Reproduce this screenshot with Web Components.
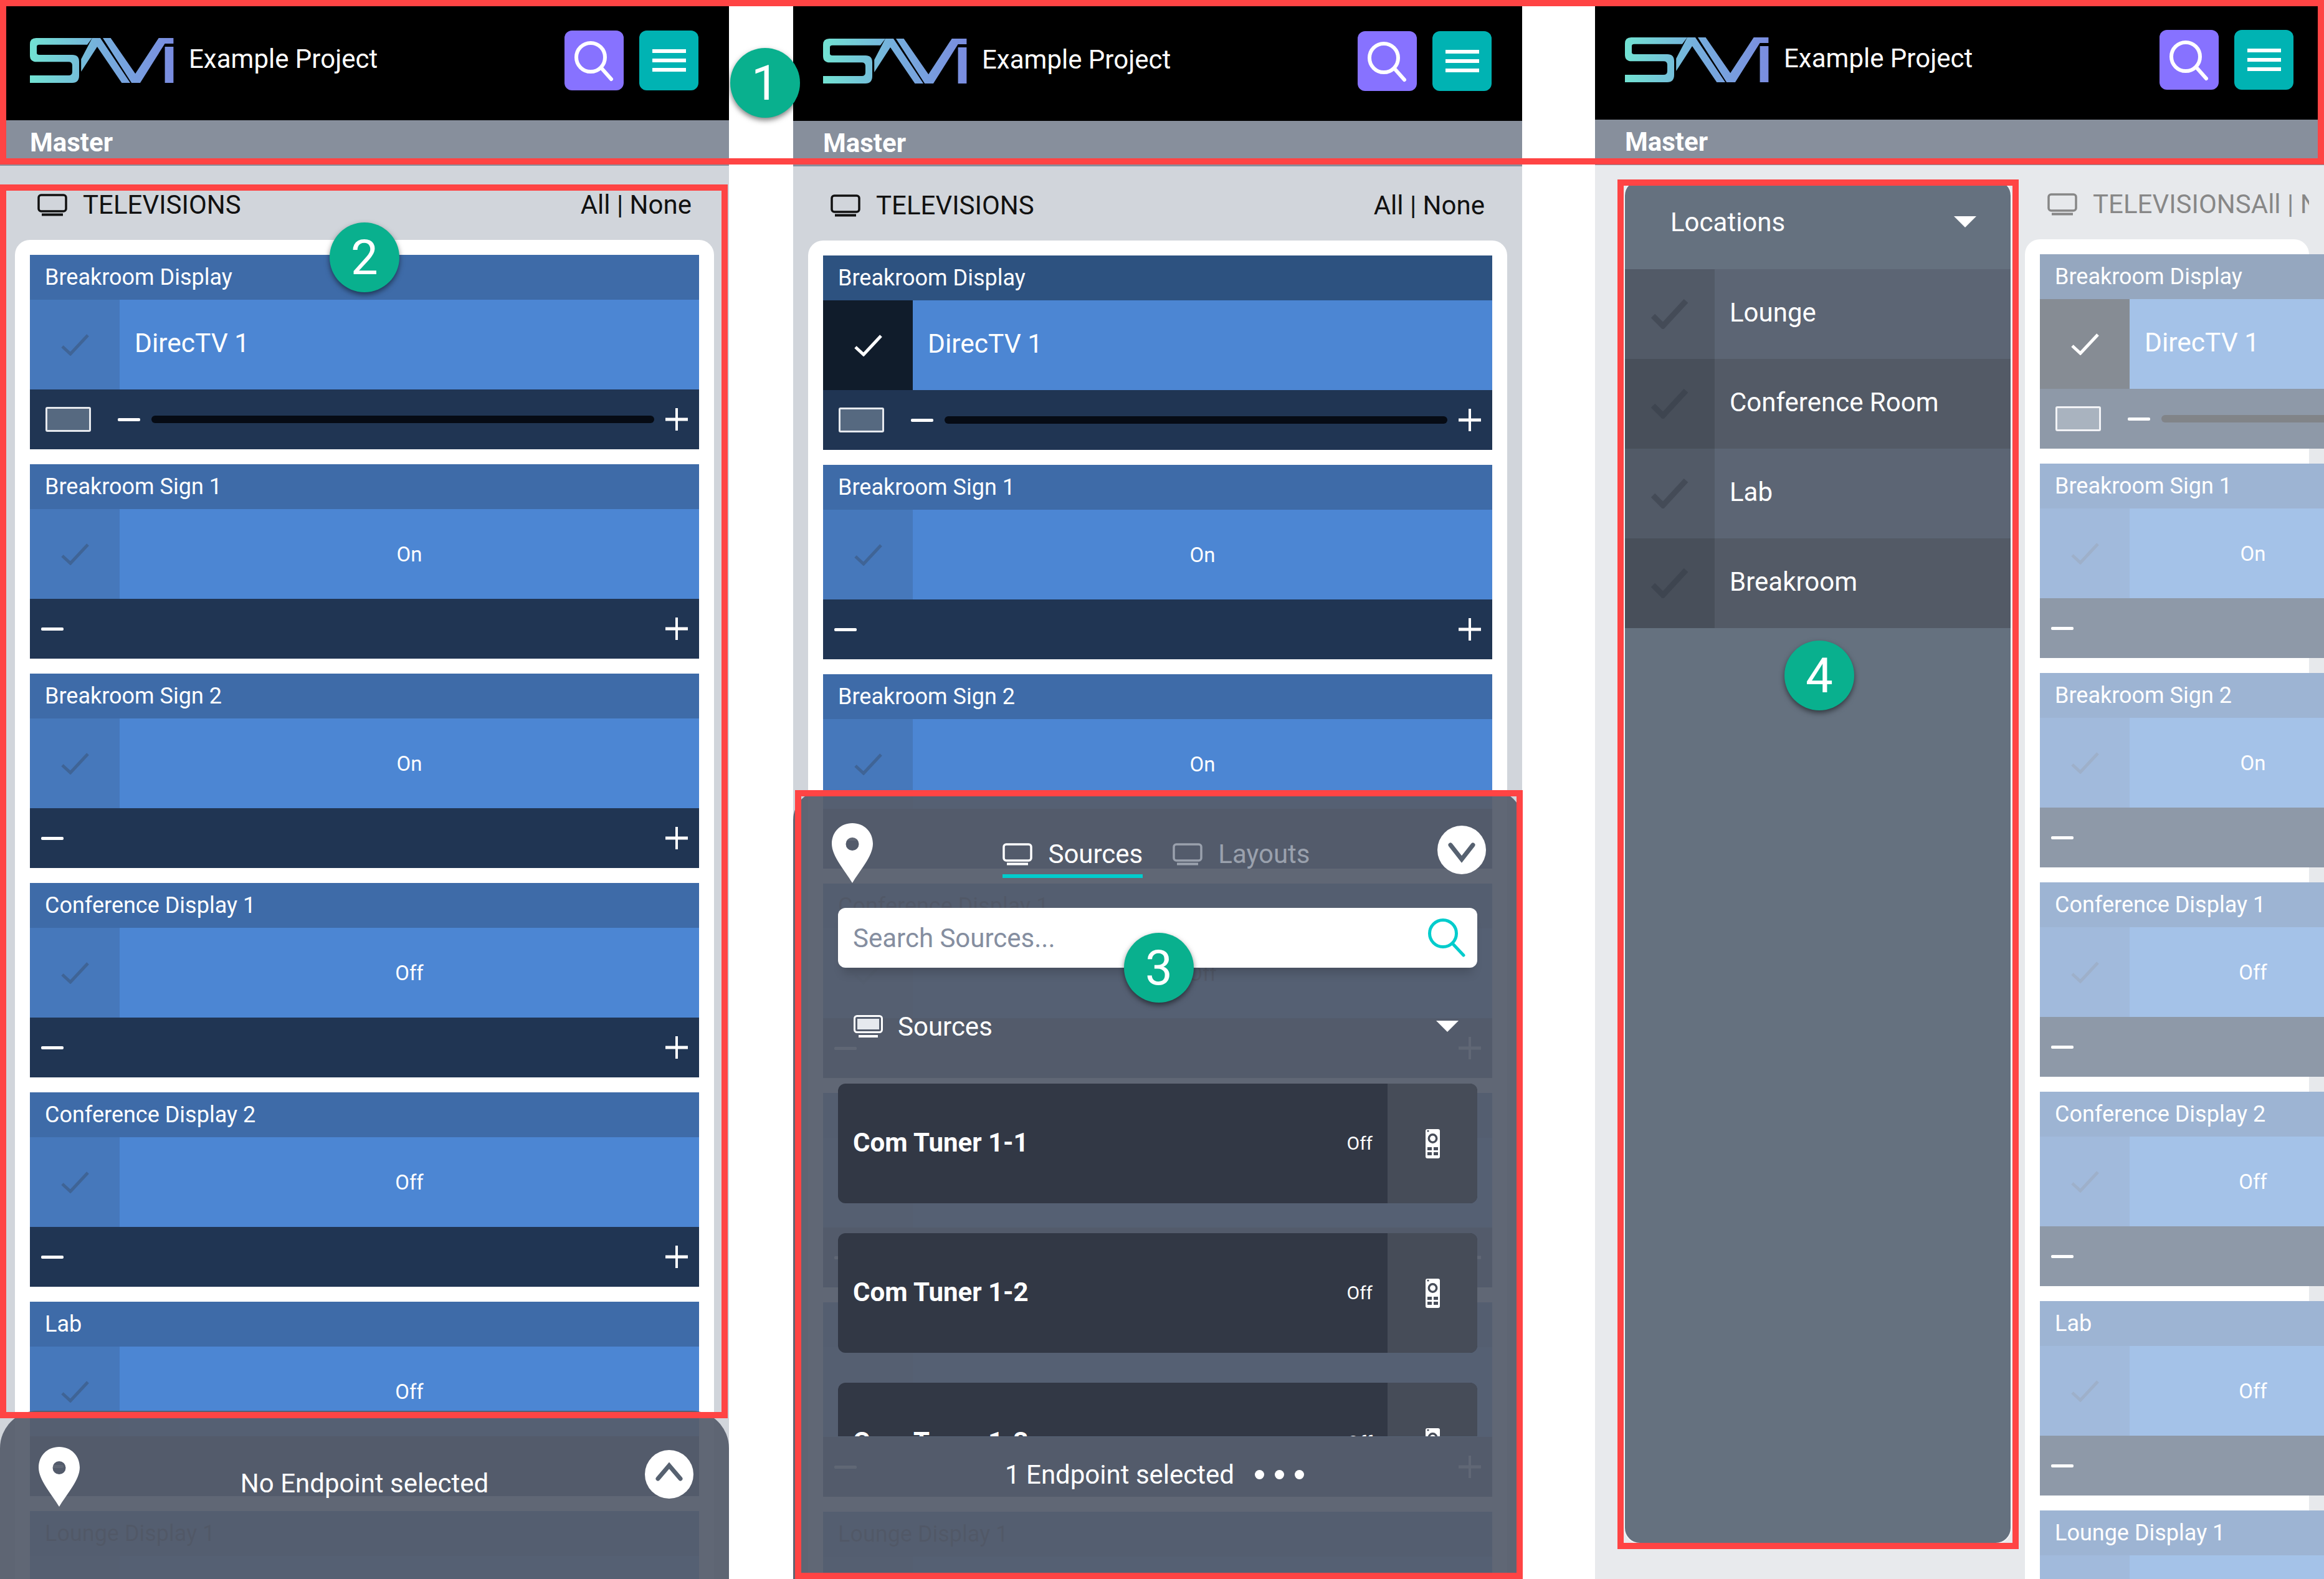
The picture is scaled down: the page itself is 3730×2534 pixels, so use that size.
<!DOCTYPE html>
<html lang="en">
<head>
<meta charset="utf-8">
<title>Example Project</title>
<style>
  html, body { margin: 0; padding: 0; width: 3730px; height: 2534px; overflow: hidden; background: #fff; }
  body { position: relative; display: flex; align-items: flex-start; font-family: Roboto, "Liberation Sans", sans-serif; }
</style>
</head>
<body>
  <savi-phone>
    <tv-list>
      <endpoint-item label="Breakroom Display" value="DirecTV 1" source slider></endpoint-item>
      <endpoint-item label="Breakroom Sign 1" value="On"></endpoint-item>
      <endpoint-item label="Breakroom Sign 2" value="On"></endpoint-item>
      <endpoint-item label="Conference Display 1" value="Off"></endpoint-item>
      <endpoint-item label="Conference Display 2" value="Off"></endpoint-item>
      <endpoint-item label="Lab" value="Off"></endpoint-item>
      <endpoint-item label="Lounge Display 1" value="Off" dim></endpoint-item>
    </tv-list>
    <endpoint-panel>No Endpoint selected</endpoint-panel>
  </savi-phone>

  <savi-phone style="margin: 1px 0 0 103px">
    <tv-list>
      <endpoint-item label="Breakroom Display" value="DirecTV 1" source slider selected></endpoint-item>
      <endpoint-item label="Breakroom Sign 1" value="On"></endpoint-item>
      <endpoint-item label="Breakroom Sign 2" value="On"></endpoint-item>
      <endpoint-item label="Conference Display 1" value="Off" dim></endpoint-item>
      <endpoint-item label="Conference Display 2" value="Off" dim></endpoint-item>
      <endpoint-item label="Lab" value="Off" dim></endpoint-item>
      <endpoint-item label="Lounge Display 1" value="Off" dim></endpoint-item>
    </tv-list>
    <source-panel>
      <source-card name="Com Tuner 1-1"></source-card>
      <source-card name="Com Tuner 1-2"></source-card>
      <source-card name="Com Tuner 1-3"></source-card>
    </source-panel>
  </savi-phone>

  <savi-phone style="margin: -1px 0 0 117px">
    <tv-list shifted>
      <endpoint-item label="Breakroom Display" value="DirecTV 1" source slider selected></endpoint-item>
      <endpoint-item label="Breakroom Sign 1" value="On"></endpoint-item>
      <endpoint-item label="Breakroom Sign 2" value="On"></endpoint-item>
      <endpoint-item label="Conference Display 1" value="Off"></endpoint-item>
      <endpoint-item label="Conference Display 2" value="Off"></endpoint-item>
      <endpoint-item label="Lab" value="Off"></endpoint-item>
      <endpoint-item label="Lounge Display 1" value="Off"></endpoint-item>
    </tv-list>
    <location-drawer>
      <location-row>Lounge</location-row>
      <location-row dark>Conference Room</location-row>
      <location-row>Lab</location-row>
      <location-row dark>Breakroom</location-row>
    </location-drawer>
  </savi-phone>

  <red-frame style="left:0;top:0;width:3730px;height:264px"></red-frame>
  <red-frame style="left:0;top:296px;width:1168px;height:1980px"></red-frame>
  <red-frame style="left:1276px;top:1268px;width:1168px;height:1266px"></red-frame>
  <red-frame style="left:2596px;top:288px;width:644px;height:2198px"></red-frame>

  <num-badge style="left:1172px;top:77px">1</num-badge>
  <num-badge style="left:529px;top:357px">2</num-badge>
  <num-badge style="left:1804px;top:1497px">3</num-badge>
  <num-badge style="left:2864px;top:1028px">4</num-badge>

<script>
  const tvIcon = `
    <svg width="48" height="36" viewBox="0 0 48 36" fill="none" stroke="currentColor" stroke-width="3.5">
      <rect x="2" y="2" width="44" height="26" rx="4"/>
      <path d="M7 33.5H41" stroke-width="4"/>
    </svg>`;

  const checkIcon = `
    <svg width="45" height="36" viewBox="0 0 45 36" fill="none" stroke="currentColor" stroke-width="5">
      <path d="M2 21L15 33L43 3"/>
    </svg>`;

  const pinIcon = `
    <svg width="66" height="96" viewBox="0 0 66 96">
      <path fill="#fff" fill-rule="evenodd" d="M33 0C14 0 0 14 0 33C0 53 21 76 33 96C45 76 66 53 66 33C66 14 52 0 33 0ZM33 23A10.5 10.5 0 1 1 33 44A10.5 10.5 0 1 1 33 23Z"/>
    </svg>`;

  // round white button, chevron flips with the panel state
  const chevron = (d) => `
    <svg width="78" height="78" viewBox="0 0 78 78">
      <circle cx="39" cy="39" r="39" fill="#fff"/>
      <path d="${d}" fill="none" stroke="#566170" stroke-width="7" stroke-linecap="round" stroke-linejoin="miter"/>
    </svg>`;

  class SaviPhone extends HTMLElement {
    constructor() {
      super();
      this.attachShadow({ mode: 'open' }).innerHTML = `
        <style>
          :host { display: block; position: relative; flex: 0 0 1170px; width: 1170px; height: 2536px; overflow: hidden; color: #fff; font-family: Roboto, "Liberation Sans", sans-serif; }
        </style>
        <savi-header></savi-header>
        <slot></slot>`;
    }
  }

  class SaviHeader extends HTMLElement {
    constructor() {
      super();
      this.attachShadow({ mode: 'open' }).innerHTML = `
        <style>
          :host { display: block; }
          .top { height: 193px; background: #000; display: flex; align-items: center; padding: 0 49px 0 48px; box-sizing: border-box; }
          .logo { display: block; margin-top: 1px; }
          .title { margin-left: 24px; font-size: 42px; line-height: 50px; margin-top: -4px; flex: 1; }
          .btn { width: 95px; height: 96px; border-radius: 12px; display: flex; align-items: center; justify-content: center; margin-left: 25px; margin-top: 1px; }
          .search { background: #8772ff; }
          .menu { background: #00b3b3; }
          .sub { height: 73px; background: #878f9c; padding-left: 48px; font-size: 42px; font-weight: 700; line-height: 72px; }
        </style>
        <div class="top">
          <svg class="logo" width="231" height="72" viewBox="0 0 231 72">
            <defs>
              <linearGradient id="g" gradientUnits="userSpaceOnUse" x1="0" y1="0" x2="231" y2="0">
                <stop offset="0" stop-color="#72e2d2"/>
                <stop offset="0.5" stop-color="#76aedd"/>
                <stop offset="1" stop-color="#7a8ce0"/>
              </linearGradient>
            </defs>
            <path fill="url(#g)" d="M10 0H100L92 10.7H15Q11 10.7 11 14V24Q11 27 15 27H68Q79 27 79 38V60Q79 72 68 72H0V60H62Q68 60 68 54V44Q68 38.3 62 38.3H11Q0 38.3 0 28V10Q0 0 10 0Z"/>
            <path fill="url(#g)" d="M100 0H113L161 72H147.4L108 14L82.2 54V34Z"/>
            <path fill="url(#g)" d="M117 0H129.6L169.2 57.3L206.7 0H230.4V9H216.6L177 72H163.2Z"/>
            <path fill="url(#g)" d="M216.6 14H230.4V72H216.6Z"/>
          </svg>
          <div class="title">Example Project</div>
          <div class="btn search">
            <svg width="95" height="96" viewBox="0 0 95 96" fill="none" stroke="#fff" stroke-width="6" stroke-linecap="round">
              <circle cx="42" cy="43" r="23"/>
              <path d="M59 60L75 78"/>
            </svg>
          </div>
          <div class="btn menu">
            <svg width="54" height="36" viewBox="0 0 54 36" fill="#fff">
              <rect y="0" width="54" height="6"/><rect y="15" width="54" height="6"/><rect y="30" width="54" height="6"/>
            </svg>
          </div>
        </div>
        <div class="sub">Master</div>`;
    }
  }

  class TvList extends HTMLElement {
    constructor() {
      super();
      this.attachShadow({ mode: 'open' }).innerHTML = `
        <style>
          :host { display: block; background: #d1d5db; height: 2270px; padding: 0 24px; color: #111; }
          :host([shifted]) { padding-left: 690px; opacity: .5; }
          .row { display: flex; align-items: center; height: 119px; box-sizing: border-box; padding: 6px 36px 0; overflow: hidden; font-size: 42px; white-space: nowrap; }
          .row svg { display: block; flex: none; margin-right: 25px; }
          .row .name { flex: 1 0 auto; }
          .row .pick { flex: none; }
          .card { background: #fff; border-radius: 24px 24px 0 0; padding: 24px; display: flex; flex-direction: column; gap: 24px; height: 100%; box-sizing: border-box; }
        </style>
        <div class="row">${tvIcon}<span class="name">TELEVISIONS</span><span class="pick">All | None</span></div>
        <div class="card"><slot></slot></div>`;
    }
  }

  class EndpointItem extends HTMLElement {
    connectedCallback() {
      if (this.shadowRoot) return;
      const label = this.getAttribute('label');
      const value = this.getAttribute('value');
      const thumb = this.hasAttribute('slider') ? '<span class="thumb"></span>' : '';
      const track = this.hasAttribute('slider') ? '<span class="track"></span>' : '<span class="grow"></span>';
      this.attachShadow({ mode: 'open' }).innerHTML = `
        <style>
          :host { display: block; min-width: 540px; color: #fff; flex: none; }
          .head { height: 72px; background: #3e6ba8; padding-left: 24px; font-size: 36px; line-height: 72px; }
          :host([selected]) .head { background: #2d5280; }
          .main { height: 144px; display: flex; background: #4c86d3; }
          .check { flex: 0 0 144px; background: #4678bb; color: #3f6496; display: flex; align-items: center; justify-content: center; }
          :host([selected]) .check { background: #101c2b; color: #fff; }
          .value { flex: 1; display: flex; align-items: center; justify-content: center; font-size: 33px; }
          :host([source]) .value { justify-content: flex-start; padding-left: 24px; font-size: 42.5px; padding-bottom: 6px; box-sizing: border-box; }
          :host([dim]) .head, :host([dim]) .value { color: #0a0f18; }
          .bar { height: 96px; background: #203553; display: flex; align-items: center; padding: 0 18px; box-sizing: border-box; }
          .thumb { flex: none; width: 73px; height: 40px; box-sizing: border-box; border: 3px solid #e6e9ee; border-radius: 3px; background: #566980; margin: 0 43px 0 7px; }
          .minus { flex: none; width: 36px; height: 5px; border-radius: 2px; background: #fff; margin-right: 18px; }
          .track { flex: 1; height: 12px; border-radius: 6px; background: #060b14; }
          .grow { flex: 1; }
          .plus { flex: none; width: 36px; height: 36px; margin-left: 18px; position: relative; }
          .plus svg { display: block; }
        </style>
        <div class="head">${label}</div>
        <div class="main">
          <div class="check">${checkIcon}</div>
          <div class="value">${value}</div>
        </div>
        <div class="bar">
          ${thumb}<span class="minus"></span>${track}
          <span class="plus"><svg width="36" height="36" viewBox="0 0 36 36" fill="#fff"><rect y="15.5" width="36" height="5"/><rect x="16" width="4" height="36"/></svg></span>
        </div>`;
    }
  }

  class EndpointPanel extends HTMLElement {
    constructor() {
      super();
      this.attachShadow({ mode: 'open' }).innerHTML = `
        <style>
          :host { position: absolute; left: 0; right: 0; top: 2264px; bottom: 0; display: grid; grid-template-columns: 66px 1fr 78px; padding: 58px 57px 0 62px; box-sizing: border-box; border-radius: 60px 60px 0 0; background: rgba(86, 94, 108, .94); color: #fff; font-size: 42px; }
          .pin svg, .chev svg { display: block; }
          .chev { margin-top: 5px; }
          .text { text-align: center; line-height: 52px; margin-top: 33px; padding-left: 7px; }
        </style>
        <div class="pin">${pinIcon}</div>
        <div class="text"><slot></slot></div>
        <div class="chev">${chevron('M21 46L39 25L57 46')}</div>`;
    }
  }

  class SourcePanel extends HTMLElement {
    constructor() {
      super();
      this.attachShadow({ mode: 'open' }).innerHTML = `
        <style>
          :host { position: absolute; left: 0; right: 0; top: 1267px; bottom: 0; display: block; border-radius: 48px 48px 0 0; background: rgba(86, 94, 108, .94); color: #fff; font-size: 42px; }
          .top { display: grid; grid-template-columns: 66px 1fr 78px; padding: 53px 58px 0 62px; height: 96px; }
          .top svg { display: block; }
          .chev { margin-top: 4px; }
          .tabs { display: flex; justify-content: center; gap: 48px; margin: 24px 0 0 4px; }
          .tab { display: flex; align-items: center; gap: 25px; height: 52px; padding-bottom: 6px; border-bottom: 6px solid transparent; line-height: 52px; color: #9aa1ad; }
          .tab.on { color: #fff; border-color: #00cccc; }
          .search { margin: 40px 72px 0; height: 96px; box-sizing: border-box; background: #fff; border-radius: 12px; display: flex; align-items: center; justify-content: space-between; padding: 0 18px 0 24px; color: #858ea0; box-shadow: 0 16px 16px -8px rgba(0, 0, 0, .18); }
          .search svg { display: block; }
          .group { margin: 47px 72px 45px; height: 94px; box-sizing: border-box; display: flex; align-items: center; padding: 0 30px 0 25px; }
          .group svg { display: block; margin-right: 24px; }
          .group span { flex: 1; }
          .tri { width: 0; height: 0; border-left: 18px solid transparent; border-right: 18px solid transparent; border-top: 18px solid #fff; }
          .cards { height: 566px; margin: 0 72px; overflow: hidden; display: flex; flex-direction: column; gap: 48px; }
          .foot { height: 122px; display: flex; align-items: center; justify-content: center; padding-right: 10px; }
          .dots { display: flex; gap: 17px; margin-left: 33px; }
          .dots i { display: block; width: 15px; height: 15px; border-radius: 50%; background: #fff; }
        </style>
        <div class="top">
          <div>${pinIcon}</div>
          <div class="tabs">
            <div class="tab on">${tvIcon}<span>Sources</span></div>
            <div class="tab">${tvIcon}<span>Layouts</span></div>
          </div>
          <div class="chev">${chevron('M21 31L39 54L57 31')}</div>
        </div>
        <div class="search">
          <span>Search Sources...</span>
          <svg width="62" height="64" viewBox="0 0 62 64" fill="none" stroke="#00cccc" stroke-width="5" stroke-linecap="round">
            <circle cx="25" cy="25" r="21.5"/><path d="M41 42L58 60"/>
          </svg>
        </div>
        <div class="group">
          <svg width="47" height="36" viewBox="0 0 47 36">
            <rect x="1.5" y="1.5" width="44" height="26" rx="4" fill="none" stroke="#fff" stroke-width="3"/>
            <rect x="6" y="6" width="35" height="17" fill="#e6e9ee"/>
            <rect x="8" y="32" width="31" height="4" fill="#fff"/>
          </svg>
          <span>Sources</span>
          <div class="tri"></div>
        </div>
        <div class="cards"><slot></slot></div>
        <div class="foot"><span>1 Endpoint selected</span><div class="dots"><i></i><i></i><i></i></div></div>`;
    }
  }

  class SourceCard extends HTMLElement {
    connectedCallback() {
      if (this.shadowRoot) return;
      this.attachShadow({ mode: 'open' }).innerHTML = `
        <style>
          :host { display: flex; flex: none; height: 192px; border-radius: 12px; overflow: hidden; background: #323845; color: #fff; }
          .body { flex: 1; display: flex; align-items: center; justify-content: space-between; padding: 0 24px 4px 24px; box-sizing: border-box; }
          b { font-size: 42px; font-weight: 700; }
          span { font-size: 30px; padding-top: 3px; }
          .side { flex: 0 0 144px; background: #464c58; display: flex; align-items: center; justify-content: center; }
          .side svg { display: block; }
        </style>
        <div class="body"><b>${this.getAttribute('name')}</b><span>Off</span></div>
        <div class="side">
          <svg width="23" height="47" viewBox="0 0 23 47">
            <rect width="23" height="47" rx="3" fill="#fff"/>
            <circle cx="4" cy="3" r="1.6" fill="#464c58"/>
            <circle cx="11.5" cy="15" r="6.2" fill="none" stroke="#464c58" stroke-width="3.5"/>
            <g fill="#464c58">
              <rect x="3" y="29" width="7" height="5"/><rect x="13" y="29" width="7" height="5"/>
              <rect x="3" y="37" width="7" height="5"/><rect x="13" y="37" width="7" height="5"/>
            </g>
          </svg>
        </div>`;
    }
  }

  class LocationDrawer extends HTMLElement {
    constructor() {
      super();
      this.attachShadow({ mode: 'open' }).innerHTML = `
        <style>
          :host { position: absolute; left: 46px; width: 623px; top: 289px; height: 2190px; box-sizing: border-box; display: block; background: #65717f; border: 2px solid #f4f5f7; border-radius: 26px; overflow: hidden; color: #fff; font-size: 42px; }
          .head { height: 142px; box-sizing: border-box; display: flex; align-items: center; justify-content: space-between; padding: 0 55px 10px 73px; }
          .tri { width: 0; height: 0; border-left: 18px solid transparent; border-right: 18px solid transparent; border-top: 18px solid #fff; }
        </style>
        <div class="head"><span>Locations</span><div class="tri"></div></div>
        <slot></slot>`;
    }
  }

  class LocationRow extends HTMLElement {
    constructor() {
      super();
      this.attachShadow({ mode: 'open' }).innerHTML = `
        <style>
          :host { display: flex; height: 144px; background: #5c6574; }
          :host([dark]) { background: #535a66; }
          .check { flex: 0 0 144px; display: flex; align-items: center; justify-content: center; background: #525a67; color: #444b57; }
          :host([dark]) .check { background: #484f5a; color: #3e4550; }
          svg { display: block; }
          .text { padding-left: 24px; display: flex; align-items: center; padding-bottom: 6px; box-sizing: border-box; }
        </style>
        <div class="check">
          <svg width="60" height="48" viewBox="0 0 60 48" fill="none" stroke="currentColor" stroke-width="9">
            <path d="M3 27L19 43L56 3"/>
          </svg>
        </div>
        <div class="text"><slot></slot></div>`;
    }
  }

  class RedFrame extends HTMLElement {
    constructor() {
      super();
      this.attachShadow({ mode: 'open' }).innerHTML = `
        <style>
          :host { position: absolute; display: block; box-sizing: border-box; border: 10px solid #ff4444; }
        </style>`;
    }
  }

  class NumBadge extends HTMLElement {
    constructor() {
      super();
      this.attachShadow({ mode: 'open' }).innerHTML = `
        <style>
          :host { position: absolute; display: flex; align-items: center; justify-content: center; width: 112px; height: 112px; border-radius: 50%; background: #09b08e; color: #fff; font-family: Roboto, "Liberation Sans", sans-serif; font-size: 78px; box-shadow: 0 4px 8px rgba(0, 0, 0, .5); }
        </style>
        <slot></slot>`;
    }
  }

  customElements.define('savi-header', SaviHeader);
  customElements.define('savi-phone', SaviPhone);
  customElements.define('tv-list', TvList);
  customElements.define('endpoint-item', EndpointItem);
  customElements.define('endpoint-panel', EndpointPanel);
  customElements.define('source-panel', SourcePanel);
  customElements.define('source-card', SourceCard);
  customElements.define('location-drawer', LocationDrawer);
  customElements.define('location-row', LocationRow);
  customElements.define('red-frame', RedFrame);
  customElements.define('num-badge', NumBadge);
</script>
</body>
</html>
